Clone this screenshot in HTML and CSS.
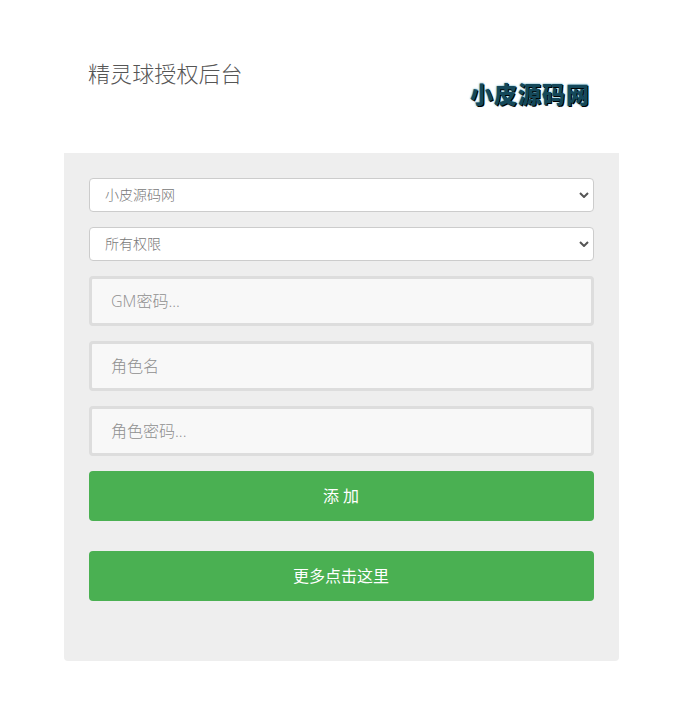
FILE: index.html
```html
<!DOCTYPE html>
<html lang="en">
<head>
    <meta charset="UTF-8">
    <meta name="viewport" content="width=device-width, initial-scale=1.0">
    <title>精灵球授权后台</title>
    <link rel="stylesheet" href="styles.css">
</head>
<body>
    <div class="container">
        <!-- Header -->
        <div class="header">
            <h1>精灵球授权后台</h1>
            <div class="logo">小皮源码网</div>
        </div>

        <!-- Form panel -->
        <form class="panel">
            <select class="field-select">
                <option>小皮源码网</option>
            </select>
            <select class="field-select">
                <option>所有权限</option>
            </select>
            <input class="field-input" type="text" placeholder="GM密码...">
            <input class="field-input" type="text" placeholder="角色名">
            <input class="field-input" type="text" placeholder="角色密码...">
            <button class="btn" type="button">添 加</button>
            <button class="btn btn-more" type="button">更多点击这里</button>
        </form>
    </div>
</body>
</html>
```

FILE: styles.css
```css
body {
    font-family: "Open Sans", "Noto Sans CJK SC", sans-serif;
    margin: 0;
    background-color: white;
}

.container {
    width: 555px;
    margin-left: 64px;
}

.header {
    height: 153px;
    padding: 0 29px 0 24px;
    box-sizing: border-box;
    display: flex;
    justify-content: space-between;
}

h1 {
    font-size: 22px;
    font-weight: 300;
    line-height: 30px;
    letter-spacing: 0.1px;
    color: #555;
    margin: 58px 0 0;
}

.logo {
    font-family: "Noto Sans CJK SC", sans-serif;
    font-size: 23px;
    font-weight: 900;
    line-height: 30px;
    letter-spacing: 1px;
    color: #14485a;
    margin-top: 78px;
    text-shadow: 1px 1px 0 #000, 0 0 2px #2a8aa8;
}

.panel {
    height: 508px;
    padding: 25px 25px 0;
    box-sizing: border-box;
    background-color: #eee;
    border-radius: 0 0 4px 4px;
    display: flex;
    flex-direction: column;
}

.field-select {
    appearance: none;
    height: 34px;
    padding: 0 15px 1px;
    margin-bottom: 15px;
    font-family: inherit;
    font-size: 14px;
    font-weight: 300;
    color: #777;
    background-color: white;
    background-image: url("data:image/svg+xml,%3Csvg xmlns='http://www.w3.org/2000/svg' width='10' height='6'%3E%3Cpath d='M1 1l4 4 4-4' fill='none' stroke='%23555' stroke-width='2'/%3E%3C/svg%3E");
    background-repeat: no-repeat;
    background-position: right 4px center;
    border: 1px solid #ccc;
    border-radius: 4px;
}

.field-input {
    height: 50px;
    padding: 0 19px;
    margin-bottom: 15px;
    box-sizing: border-box;
    font-family: inherit;
    font-size: 16px;
    font-weight: 300;
    color: #666;
    background-color: #f8f8f8;
    border: 3px solid #ddd;
    border-radius: 4px;
    outline: none;
}

.field-input::placeholder {
    color: #8f8f8f;
}

.btn {
    height: 50px;
    padding: 0 1px 2px 0;
    font-family: inherit;
    font-size: 16px;
    color: white;
    background-color: #4ab052;
    border: none;
    border-radius: 4px;
    cursor: pointer;
}

.btn-more {
    margin-top: 30px;
}
```
